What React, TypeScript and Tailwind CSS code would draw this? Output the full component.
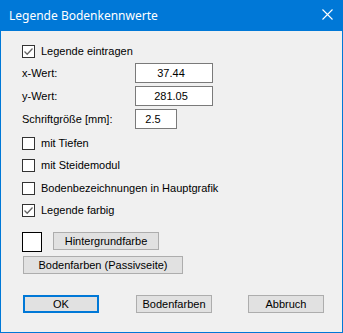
import React from 'react';

const font = { fontFamily: '"Liberation Sans", Arial, sans-serif' };

function CheckBox({ checked, label, className }: { checked?: boolean; label: string; className?: string }) {
  return (
    <div className={`flex h-[13px] items-center ${className ?? ''}`}>
      <div className="flex h-[13px] w-[13px] items-center justify-center border border-[#333333] bg-white">
        {checked && (
          <svg width="11" height="11" viewBox="0 0 11 11">
            <path d="M1.5 5.5 L4.2 8.2 L9.5 2.5" fill="none" stroke="#666666" strokeWidth="1.3" />
          </svg>
        )}
      </div>
      <span className="ml-[6px] text-[11px] leading-none text-black">{label}</span>
    </div>
  );
}

function Field({ label, value, width, className }: { label: string; value: string; width: string; className?: string }) {
  return (
    <div className={`flex items-center ${className ?? ''}`}>
      <span className="w-[113px] text-[11px] text-black">{label}</span>
      <div
        className={`flex h-[20px] ${width} items-center justify-center border border-[#7a7a7a] bg-white pr-[6px] text-[11px] text-black`}
      >
        {value}
      </div>
    </div>
  );
}

function Button({ children, className }: { children: React.ReactNode; className?: string }) {
  return (
    <div
      className={`flex items-center justify-center border border-[#adadad] bg-[#e1e1e1] text-[11px] text-black ${className ?? ''}`}
    >
      {children}
    </div>
  );
}

export default function App() {
  return (
    <div className="flex h-[333px] w-[343px] flex-col bg-[#0078d7]" style={font}>
      <div className="flex h-[31px] shrink-0 items-center justify-between pl-[9px] pr-[10px]">
        <span className="text-[12px] text-white" style={{ fontFamily: '"Noto Sans", sans-serif' }}>
          Legende Bodenkennwerte
        </span>
        <svg width="11" height="11" viewBox="0 0 11 11" className="mt-[-2px]">
          <path d="M0.5 0.5 L10.5 10.5 M10.5 0.5 L0.5 10.5" stroke="white" strokeWidth="1.1" />
        </svg>
      </div>
      <div className="mx-[1px] mb-[1px] flex flex-1 flex-col bg-[#f0f0f0] pl-[21px]">
        <CheckBox checked label="Legende eintragen" className="mt-[14px]" />
        <Field label="x-Wert:" value="37.44" width="w-[78px]" className="mt-[5px]" />
        <Field label="y-Wert:" value="281.05" width="w-[78px]" className="mt-[3px]" />
        <Field label="Schriftgröße [mm]:" value="2.5" width="w-[42px]" className="mt-[3px]" />
        <CheckBox label="mit Tiefen" className="mt-[8px]" />
        <CheckBox label="mit Steidemodul" className="mt-[9px]" />
        <CheckBox label="Bodenbezeichnungen in Hauptgrafik" className="mt-[10px]" />
        <CheckBox checked label="Legende farbig" className="mt-[9px]" />
        <div className="mt-[15px] flex items-start">
          <div className="h-[20px] w-[20px] border border-black bg-white" />
          <Button className="ml-[11px] h-[18px] w-[106px]">Hintergrundfarbe</Button>
        </div>
        <Button className="ml-[1px] mt-[4px] h-[18px] w-[160px]">Bodenfarben (Passivseite)</Button>
        <div className="mt-[21px] flex items-center">
          <div className="ml-[1px] flex h-[18px] w-[76px] items-center justify-center border-2 border-[#0078d7] bg-[#e1e1e1] text-[11px] text-black">
            OK
          </div>
          <Button className="ml-[37px] h-[18px] w-[76px]">Bodenfarben</Button>
          <Button className="ml-[36px] h-[18px] w-[76px]">Abbruch</Button>
        </div>
      </div>
    </div>
  );
}
